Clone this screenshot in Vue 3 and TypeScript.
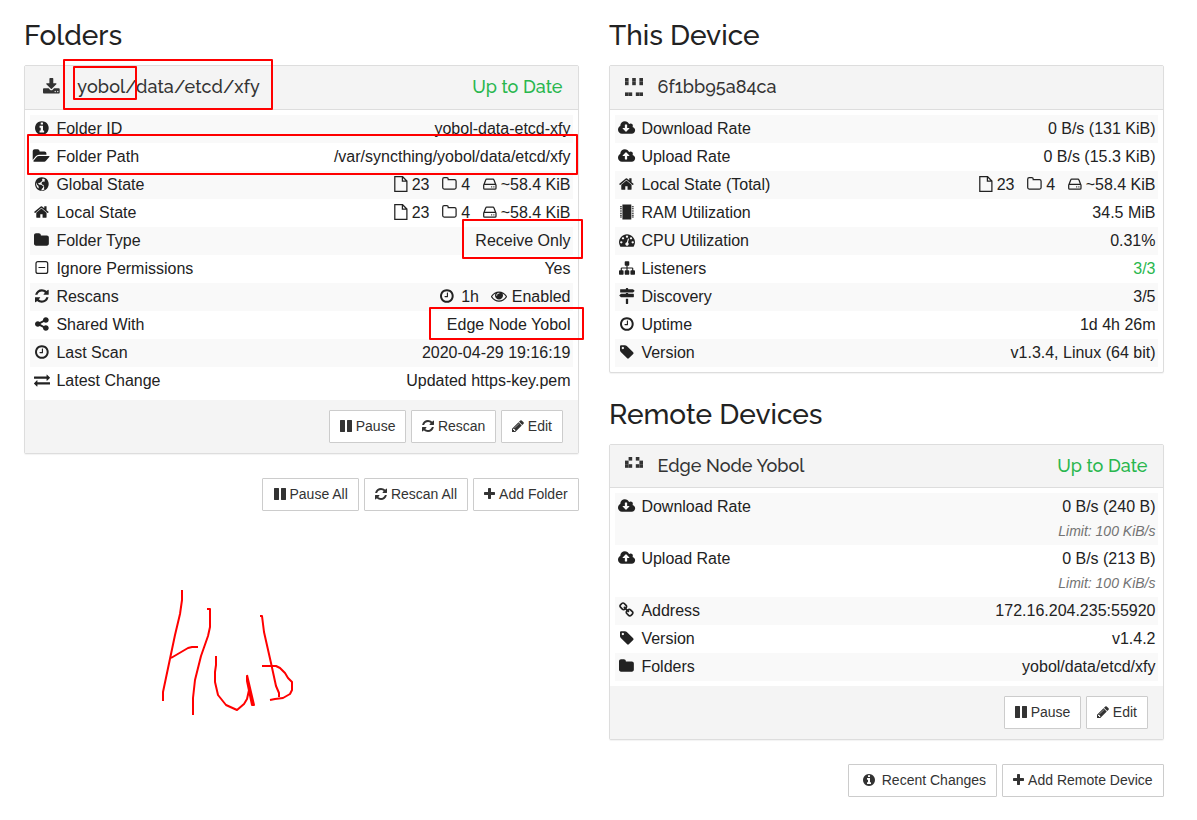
<script setup lang="ts">
import { defineComponent, h } from 'vue'

interface Glyph { box: string; d: string; line?: boolean }

const circle = 'q0 209-103 385.5t-279.5 279.5-385.5 103-385.5-103-279.5-279.5-103-385.5 103-385.5 279.5-279.5 385.5-103 385.5 103 279.5 279.5 103 385.5z'
const cloud = 'M1984 1152q0 159-112.5 271.5t-271.5 112.5h-1088q-185 0-316.5-131.5t-131.5-316.5q0-130 70-240t188-165q-2-30-2-43 0-212 150-362t362-150q156 0 285.5 87t188.5 231q71-62 166-62 106 0 181 75t75 181q0 76-41 138 130 31 213.5 135.5t83.5 238.5z'

const glyphs: Record<string, Glyph> = {
  info: { box: '128 0 1536 1792', d: 'M1152 1376v-160q0-14-9-23t-23-9h-96v-512q0-14-9-23t-23-9h-320q-14 0-23 9t-9 23v160q0 14 9 23t23 9h96v320h-96q-14 0-23 9t-9 23v160q0 14 9 23t23 9h448q14 0 23-9t9-23zm-128-896v-160q0-14-9-23t-23-9h-192q-14 0-23 9t-9 23v160q0 14 9 23t23 9h192q14 0 23-9t9-23zm640 416' + circle },
  folderOpen: { box: '-32 0 1879 1792', d: 'M1815 952q0 31-31 66l-336 396q-43 51-120.5 86.5t-143.5 35.5h-1088q-34 0-60.5-13t-26.5-43q0-31 31-66l336-396q43-51 120.5-86.5t143.5-35.5h1088q34 0 60.5 13t26.5 43zm-343-344v160h-832q-94 0-197 47.5t-164 119.5l-337 396-5 6q0-4-.5-12.5t-.5-12.5v-960q0-92 66-158t158-66h320q92 0 158 66t66 158v32h544q92 0 158 66t66 158z' },
  folder: { box: '64 0 1664 1792', d: 'M1728 608v704q0 92-66 158t-158 66h-1216q-92 0-158-66t-66-158v-960q0-92 66-158t158-66h320q92 0 158 66t66 158v32h672q92 0 158 66t66 158z' },
  home: { box: '64 0 1664 1792', d: 'M1472 992v480q0 26-19 45t-45 19h-384v-384h-256v384h-384q-26 0-45-19t-19-45v-480q0-1 .5-3t.5-3l575-474 575 474q1 2 1 6zm223-69l-62 74q-8 9-21 11h-3q-13 0-21-7l-692-577-692 577q-12 8-24 7-13-2-21-11l-62-74q-8-10-7-23.5t11-21.5l719-599q32-26 76-26t76 26l244 204v-195q0-14 9-23t23-9h192q14 0 23 9t9 23v408l219 182q10 8 11 21.5t-7 23.5z' },
  refresh: { box: '128 0 1536 1792', d: 'M1639 1056q0 5-1 7-64 268-268 434.5t-478 166.5q-146 0-282.5-55t-243.5-157l-129 129q-19 19-45 19t-45-19-19-45v-448q0-26 19-45t45-19h448q26 0 45 19t19 45-19 45l-137 137q71 66 161 102t187 36q134 0 250-65t186-179q11-17 53-117 8-23 30-23h192q13 0 22.5 9.5t9.5 22.5zm25-800v448q0 26-19 45t-45 19h-448q-26 0-45-19t-19-45 19-45l138-138q-148-137-349-137-134 0-250 65t-186 179q-11 17-53 117-8 23-30 23h-199q-13 0-22.5-9.5t-9.5-22.5v-7q65-268 270-434.5t480-166.5q146 0 284 55.5t245 156.5l130-129q19-19 45-19t45 19 19 45z' },
  share: { box: '128 0 1536 1792', d: 'M1344 1024q133 0 226.5 93.5t93.5 226.5-93.5 226.5-226.5 93.5-226.5-93.5-93.5-226.5q0-12 2-34l-360-180q-92 86-218 86-133 0-226.5-93.5t-93.5-226.5 93.5-226.5 226.5-93.5q126 0 218 86l360-180q-2-22-2-34 0-133 93.5-226.5t226.5-93.5 226.5 93.5 93.5 226.5-93.5 226.5-226.5 93.5q-126 0-218-86l-360 180q2 22 2 34t-2 34l360 180q92-86 218-86z' },
  clock: { box: '128 0 1536 1792', d: 'M1024 544v448q0 14-9 23t-23 9h-320q-14 0-23-9t-9-23v-64q0-14 9-23t23-9h224v-352q0-14 9-23t23-9h64q14 0 23 9t9 23zm416 352q0-148-73-273t-198-198-273-73-273 73-198 198-73 273 73 273 198 198 273 73 273-73 198-198 73-273zm224 0' + circle },
  exchange: { box: '0 0 1792 1792', d: 'M1792 1184v192q0 13-9.5 22.5t-22.5 9.5h-1376v192q0 13-9.5 22.5t-22.5 9.5q-12 0-24-10l-319-320q-9-9-9-22 0-14 9-23l320-320q9-9 23-9 13 0 22.5 9.5t9.5 22.5v192h1376q13 0 22.5 9.5t9.5 22.5zm0-544q0 14-9 23l-320 320q-9 9-23 9-13 0-22.5-9.5t-9.5-22.5v-192h-1376q-13 0-22.5-9.5t-9.5-22.5v-192q0-13 9.5-22.5t22.5-9.5h1376v-192q0-14 9-23t23-9q12 0 24 10l319 319q9 9 9 23z' },
  eye: { box: '0 0 1792 1792', d: 'M1664 960q-152-236-381-353 61 104 61 225 0 185-131.5 316.5t-316.5 131.5-316.5-131.5-131.5-316.5q0-121 61-225-229 117-381 353 133 205 333.5 326.5t434.5 121.5 434.5-121.5 333.5-326.5zm-720-384q0-20-14-34t-34-14q-125 0-214.5 89.5t-89.5 214.5q0 20 14 34t34 14 34-14 14-34q0-86 61-147t147-61q20 0 34-14t14-34zm848 384q0 34-20 69-140 230-376.5 368.5t-499.5 138.5-499.5-139-376.5-368q-20-35-20-69t20-69q140-229 376.5-368t499.5-139 499.5 139 376.5 368q20 35 20 69z' },
  pencil: { box: '128 0 1536 1792', d: 'M491 1536l91-91-235-235-91 91v107h128v128h107zm523-928q0-22-22-22-10 0-17 7l-542 542q-7 7-7 17 0 22 22 22 10 0 17-7l542-542q7-7 7-17zm-54-192l416 416-832 832h-416v-416zm683 96q0 53-37 90l-166 166-416-416 166-165q36-38 90-38 53 0 91 38l235 234q37 39 37 91z' },
  plus: { box: '192 0 1408 1792', d: 'M1600 736v192q0 40-28 68t-68 28h-416v416q0 40-28 68t-68 28h-192q-40 0-68-28t-28-68v-416h-416q-40 0-68-28t-28-68v-192q0-40 28-68t68-28h416v-416q0-40 28-68t68-28h192q40 0 68 28t28 68v416h416q40 0 68 28t28 68z' },
  pause: { box: '128 0 1536 1792', d: 'M1664 192v1408q0 26-19 45t-45 19h-512q-26 0-45-19t-19-45v-1408q0-26 19-45t45-19h512q26 0 45 19t19 45zm-896 0v1408q0 26-19 45t-45 19h-512q-26 0-45-19t-19-45v-1408q0-26 19-45t45-19h512q26 0 45 19t19 45z' },
  sitemap: { box: '0 0 1792 1792', d: 'M1792 1248v320q0 40-28 68t-68 28h-320q-40 0-68-28t-28-68v-320q0-40 28-68t68-28h96v-192h-512v192h96q40 0 68 28t28 68v320q0 40-28 68t-68 28h-320q-40 0-68-28t-28-68v-320q0-40 28-68t68-28h96v-192h-512v192h96q40 0 68 28t28 68v320q0 40-28 68t-68 28h-320q-40 0-68-28t-28-68v-320q0-40 28-68t68-28h96v-192q0-52 38-90t90-38h512v-192h-96q-40 0-68-28t-28-68v-320q0-40 28-68t68-28h320q40 0 68 28t28 68v320q0 40-28 68t-68 28h-96v192h512q52 0 90 38t38 90v192h96q40 0 68 28t28 68z' },
  tag: { box: '128 0 1536 1792', d: 'M576 448q0-53-37.5-90.5t-90.5-37.5-90.5 37.5-37.5 90.5 37.5 90.5 90.5 37.5 90.5-37.5 37.5-90.5zm1067 576q0 53-37 90l-491 492q-39 37-91 37-53 0-90-37l-715-716q-38-37-64.5-101t-26.5-117v-416q0-52 38-90t90-38h416q53 0 117 26.5t102 64.5l715 714q37 39 37 91z' },
  cloudDown: { box: '64 0 1920 1792', d: 'M1344 928q0-14-9-23t-23-9h-224v-352q0-13-9.5-22.5t-22.5-9.5h-192q-13 0-22.5 9.5t-9.5 22.5v352h-224q-13 0-22.5 9.5t-9.5 22.5q0 14 9 23l352 352q9 9 23 9t23-9l351-351q10-12 10-24z' + cloud },
  cloudUp: { box: '64 0 1920 1792', d: 'M1344 864q0-14-9-23l-352-352q-9-9-23-9t-23 9l-351 351q-10 12-10 24 0 14 9 23t23 9h224v352q0 13 9.5 22.5t22.5 9.5h192q13 0 22.5-9.5t9.5-22.5v-352h224q13 0 22.5-9.5t9.5-22.5z' + cloud },
  gauge: { box: '0 0 1792 1792', d: 'M384 1152q0-53-37.5-90.5t-90.5-37.5-90.5 37.5-37.5 90.5 37.5 90.5 90.5 37.5 90.5-37.5 37.5-90.5zm192-448q0-53-37.5-90.5t-90.5-37.5-90.5 37.5-37.5 90.5 37.5 90.5 90.5 37.5 90.5-37.5 37.5-90.5zm428 481l101-382q6-26-7.5-48.5t-38.5-29.5-48 6.5-30 39.5l-101 382q-60 5-107 43.5t-63 98.5q-20 77 20 146t117 89 146-20 89-117q16-60-6-117t-72-91zm660-33q0-53-37.5-90.5t-90.5-37.5-90.5 37.5-37.5 90.5 37.5 90.5 90.5 37.5 90.5-37.5 37.5-90.5zm-640-640q0-53-37.5-90.5t-90.5-37.5-90.5 37.5-37.5 90.5 37.5 90.5 90.5 37.5 90.5-37.5 37.5-90.5zm448 192q0-53-37.5-90.5t-90.5-37.5-90.5 37.5-37.5 90.5 37.5 90.5 90.5 37.5 90.5-37.5 37.5-90.5zm320 448q0 261-141 483-19 29-54 29h-1402q-35 0-54-29-141-221-141-483 0-182 71-348t191-286 286-191 348-71 348 71 286 191 191 286 71 348z' },
  signs: { box: '0 0 1792 1792', d: 'M1745 297q10 10 10 23t-10 23l-141 141q-28 28-68 28h-1344q-26 0-45-19t-19-45v-256q0-26 19-45t45-19h576v-64q0-26 19-45t45-19h128q26 0 45 19t19 45v64h512q40 0 68 28zm-977 919h256v512q0 26-19 45t-45 19h-128q-26 0-45-19t-19-45v-512zm832-576q26 0 45 19t19 45v256q0 26-19 45t-45 19h-1344q-40 0-68-28l-141-141q-10-10-10-23t10-23l141-141q28-28 68-28h512v-192h256v192h576z' },
  link: { box: '64 0 1664 1792', d: 'M1520 1216q0-40-28-68l-208-208q-28-28-68-28-42 0-72 32 3 3 19 18.5t21.5 21.5 15 19 13 25.5 3.5 27.5q0 40-28 68t-68 28q-15 0-27.5-3.5t-25.5-13-19-15-21.5-21.5-18.5-19q-33 31-33 73 0 40 28 68l206 207q27 27 68 27 40 0 68-26l147-146q28-28 28-67zm-703-705q0-40-28-68l-206-207q-28-28-68-28-39 0-68 27l-147 146q-28 28-28 67 0 40 28 68l208 208q27 27 68 27 42 0 72-31-3-3-19-18.5t-21.5-21.5-15-19-13-25.5-3.5-27.5q0-40 28-68t68-28q15 0 27.5 3.5t25.5 13 19 15 21.5 21.5 18.5 19q33-31 33-73zm895 705q0 120-85 203l-147 146q-83 83-203 83-121 0-204-85l-206-207q-83-83-83-203 0-123 88-209l-88-88q-86 88-208 88-120 0-204-84l-208-208q-84-84-84-204t85-203l147-146q83-83 203-83 121 0 204 85l206 207q83 83 83 203 0 123-88 209l88 88q86-88 208-88 120 0 204 84l208 208q84 84 84 204z' },
  download: { box: '64 0 1664 1792', d: 'M1344 1344q0-26-19-45t-45-19-45 19-19 45 19 45 45 19 45-19 19-45zm256 0q0-26-19-45t-45-19-45 19-19 45 19 45 45 19 45-19 19-45zm128-224v320q0 40-28 68t-68 28h-1472q-40 0-68-28t-28-68v-320q0-40 28-68t68-28h465l135 136q58 56 136 56t136-56l136-136h464q40 0 68 28t28 68zm-325-569q17 41-14 70l-448 448q-18 19-45 19t-45-19l-448-448q-31-29-14-70 17-39 59-39h256v-448q0-26 19-45t45-19h256q26 0 45 19t19 45v448h256q42 0 59 39z' },
  chip: { box: '128 0 1536 1792', d: 'M400 64h992v1664h-992zM128 256h208v96h-208zM128 448h208v96h-208zM128 640h208v96h-208zM128 832h208v96h-208zM128 1024h208v96h-208zM128 1216h208v96h-208zM128 1408h208v96h-208zM1456 256h208v96h-208zM1456 448h208v96h-208zM1456 640h208v96h-208zM1456 832h208v96h-208zM1456 1024h208v96h-208zM1456 1216h208v96h-208zM1456 1408h208v96h-208z' },
  globe: { box: '128 0 1536 1792', d: 'M1664 896' + circle + 'M1010 270l-110 130 60 60-50 120-150 90-60 120-130-40-90 60 60 110 130 60 170 10 130 110 110 60-60 170-120 110-60 160q190 10 350-90l-60-130 40-150-80-130 20-90-150-30-100-140 40-150 130-80 140 30 60-80-40-90 70-50q-90-90-250-150zM300 720q-50 130-30 290 50 240 240 380l40-130-60-170-130-120z' },
  file: { box: '0 0 13.7 16', line: true, d: 'M.8 .7H8.6L12.9 5V15.3H.8zM8.4 .9V5.2H12.7' },
  folderLine: { box: '0 0 14.9 16', line: true, d: 'M.7 3.2Q.7 1.7 2.2 1.7H4.8Q6.2 1.7 6.2 3V3.7H12.6Q14.1 3.7 14.1 5.2V11.6Q14.1 13.1 12.6 13.1H2.2Q.7 13.1 .7 11.6z' },
  drive: { box: '0 0 13.7 16', line: true, d: 'M.7 9Q.7 8.3 1.7 8.3H12Q13 8.3 13 9V12.2Q13 13.2 12 13.2H1.7Q.7 13.2 .7 12.2zM.9 8.8L2.8 3.8Q3 3.2 3.7 3.2H10Q10.7 3.2 10.9 3.8L12.8 8.8M8.2 10.8H9.2M10.4 10.8H11.4' },
  minusSquare: { box: '0 0 13.7 16', line: true, d: 'M3 1.6H10.7Q12.7 1.6 12.7 3.6V11.4Q12.7 13.4 10.7 13.4H3Q1 13.4 1 11.4V3.6Q1 1.6 3 1.6zM3.5 7.5H10.2' },
}

const Icon = defineComponent({
  props: { name: { type: String, required: true }, fixed: Boolean },
  setup(props) {
    return () => {
      const g = glyphs[props.name]
      const [, , w, ht] = g.box.split(' ').map(Number)
      const svg = h('svg', {
        viewBox: g.box,
        width: `${w / ht}em`,
        height: '1em',
        class: g.line ? 'glyph line' : 'glyph',
      }, [h('path', { d: g.d, 'fill-rule': 'evenodd' })])
      return h('span', { class: props.fixed ? 'icon fixed' : 'icon' }, [svg])
    }
  },
})

interface Part { icon: string; text: string; fixed?: boolean }
interface Row { icon: string; label: string; value?: string; parts?: Part[]; note?: string; ok?: boolean }

const counts: Part[] = [
  { icon: 'file', text: '23' },
  { icon: 'folderLine', text: '4' },
  { icon: 'drive', text: '~58.4 KiB' },
]

const folderRows: Row[] = [
  { icon: 'info', label: 'Folder ID', value: 'yobol-data-etcd-xfy' },
  { icon: 'folderOpen', label: 'Folder Path', value: '/var/syncthing/yobol/data/etcd/xfy' },
  { icon: 'globe', label: 'Global State', parts: counts },
  { icon: 'home', label: 'Local State', parts: counts },
  { icon: 'folder', label: 'Folder Type', value: 'Receive Only' },
  { icon: 'minusSquare', label: 'Ignore Permissions', value: 'Yes' },
  { icon: 'refresh', label: 'Rescans', parts: [{ icon: 'clock', text: '1h', fixed: true }, { icon: 'eye', text: 'Enabled' }] },
  { icon: 'share', label: 'Shared With', value: 'Edge Node Yobol' },
  { icon: 'clock', label: 'Last Scan', value: '2020-04-29 19:16:19' },
  { icon: 'exchange', label: 'Latest Change', value: 'Updated https-key.pem' },
]

const deviceRows: Row[] = [
  { icon: 'cloudDown', label: 'Download Rate', value: '0 B/s (131 KiB)' },
  { icon: 'cloudUp', label: 'Upload Rate', value: '0 B/s (15.3 KiB)' },
  { icon: 'home', label: 'Local State (Total)', parts: counts },
  { icon: 'chip', label: 'RAM Utilization', value: '34.5 MiB' },
  { icon: 'gauge', label: 'CPU Utilization', value: '0.31%' },
  { icon: 'sitemap', label: 'Listeners', value: '3/3', ok: true },
  { icon: 'signs', label: 'Discovery', value: '3/5' },
  { icon: 'clock', label: 'Uptime', value: '1d 4h 26m' },
  { icon: 'tag', label: 'Version', value: 'v1.3.4, Linux (64 bit)' },
]

const remoteRows: Row[] = [
  { icon: 'cloudDown', label: 'Download Rate', value: '0 B/s (240 B)', note: 'Limit: 100 KiB/s' },
  { icon: 'cloudUp', label: 'Upload Rate', value: '0 B/s (213 B)', note: 'Limit: 100 KiB/s' },
  { icon: 'link', label: 'Address', value: '172.16.204.235:55920' },
  { icon: 'tag', label: 'Version', value: 'v1.4.2' },
  { icon: 'folder', label: 'Folders', value: 'yobol/data/etcd/xfy' },
]

const Rows = defineComponent({
  props: { rows: { type: Array as () => Row[], required: true } },
  setup(props) {
    return () => h('div', { class: 'rows' }, props.rows.map((r) =>
      h('div', { class: 'row' }, [
        h('div', { class: 'label' }, [h(Icon, { name: r.icon, fixed: true }), '\u00a0' + r.label]),
        h('div', { class: r.ok ? 'value ok' : 'value' }, [
          r.parts
            ? r.parts.map((p) => h('span', { class: 'part' }, [h(Icon, { name: p.icon, fixed: p.fixed }), '\u00a0' + p.text]))
            : r.value,
          r.note ? h('div', { class: 'note' }, r.note) : null,
        ]),
      ])))
  },
})

const localCells = [[0, 0], [2, 0], [4, 0], [0, 1], [2, 1], [4, 1], [0, 4], [1, 4], [3, 4], [4, 4]]
const remoteCells = [[1, 0], [3, 0], [0, 1], [4, 1], [0, 2], [1, 2], [3, 2], [4, 2]]
</script>

<template>
  <main class="page">
    <section class="column">
      <h3 class="title">Folders</h3>
      <div class="panel">
        <header class="head">
          <Icon name="download" fixed class="head-icon" />
          <span class="name n-folder">yobol/data/etcd/xfy</span>
          <span class="status">Up to Date</span>
        </header>
        <Rows :rows="folderRows" />
        <footer class="foot">
          <button class="btn"><Icon name="pause" />&nbsp;Pause</button>
          <button class="btn"><Icon name="refresh" />&nbsp;Rescan</button>
          <button class="btn"><Icon name="pencil" />&nbsp;Edit</button>
        </footer>
      </div>
      <div class="actions">
        <button class="btn"><Icon name="pause" />&nbsp;Pause All</button>
        <button class="btn"><Icon name="refresh" />&nbsp;Rescan All</button>
        <button class="btn"><Icon name="plus" />&nbsp;Add Folder</button>
      </div>
    </section>

    <section class="column">
      <h3 class="title">This Device</h3>
      <div class="panel device">
        <header class="head">
          <svg class="identicon" viewBox="0 0 5 5">
            <rect v-for="c in localCells" :key="c.join()" :x="c[0]" :y="c[1]" width="1" height="1" />
          </svg>
          <span class="name">6f1bb95a84ca</span>
        </header>
        <Rows :rows="deviceRows" />
      </div>
      <h3 class="title t-remote">Remote Devices</h3>
      <div class="panel remote">
        <header class="head">
          <svg class="identicon" viewBox="0 0 5 5">
            <rect v-for="c in remoteCells" :key="c.join()" :x="c[0]" :y="c[1]" width="1" height="1" />
          </svg>
          <span class="name">Edge Node Yobol</span>
          <span class="status">Up to Date</span>
        </header>
        <Rows :rows="remoteRows" />
        <footer class="foot">
          <button class="btn"><Icon name="pause" />&nbsp;Pause</button>
          <button class="btn"><Icon name="pencil" />&nbsp;Edit</button>
        </footer>
      </div>
      <div class="actions">
        <button class="btn"><Icon name="info" fixed />&nbsp;Recent Changes</button>
        <button class="btn"><Icon name="plus" />&nbsp;Add Remote Device</button>
      </div>
    </section>

    <svg class="marks" viewBox="0 0 1197 820" width="1197" height="820">
      <rect x="64" y="60" width="208" height="49" />
      <rect x="74" y="67" width="62" height="32" />
      <rect x="28" y="135" width="549" height="39" />
      <rect x="463" y="220" width="119" height="38" />
      <rect x="430" y="308" width="153" height="31" />
      <path d="M182 590V600L180 614L175 635L163 692V701M171 658L188 648L192 647H198M207 609H210V627L208 636L201 656L195 680L193 698V715" />
      <path d="M216 656V665L215 672V682L218 695L226 705L237 710L244 704L247 699L249 690L247 676V681L252 705H254L247 675" />
      <path d="M260 616H262L264 632L271 663L276 686L279 693V697M262 666H276L280 668L285 673L288 678L292 682V690L290 694L283 698L275 699L270 700" />
    </svg>
  </main>
</template>

<style>
html, body { margin: 0; background: #fff; overflow: hidden; }
.icon { display: inline-block; line-height: 1; }
.icon.fixed { width: 1.2857em; text-align: center; }
.glyph { display: inline-block; vertical-align: -0.143em; fill: currentColor; overflow: visible; }
.glyph.line { fill: none; stroke: currentColor; stroke-width: 1.25; }
.rows { padding: 5px; }
.row { display: flex; justify-content: space-between; padding: 0 2.5px 0 1.4px; line-height: 28px; }
.row:nth-child(odd) { background: #f9f9f9; }
.label, .value { white-space: nowrap; }
.value { text-align: right; }
.value.ok { color: #29b74e; }
.part + .part { margin-left: 12.4px; }
.note { height: 24px; line-height: 20px; font-size: 14px; font-style: italic; color: #737373; }
</style>

<style scoped>
.page {
  position: relative;
  box-sizing: border-box;
  display: flex;
  gap: 30px;
  width: 1197px;
  height: 820px;
  padding: 15px 33px 0 24px;
  font: 16px/28px "Liberation Sans", Arial, sans-serif;
  color: #222;
}
.column { width: 555px; }
.title {
  height: 40px;
  margin: 0 0 10px;
  font: 500 28px/42px Raleway, Lato, sans-serif;
  color: #222;
  white-space: nowrap;
}
.t-remote { margin-top: 21px; }
.panel {
  box-sizing: border-box;
  border: 1px solid #ddd;
  border-radius: 2px;
  background: #fff;
  box-shadow: 0 1px 1px rgba(0, 0, 0, 0.05);
}
.head {
  box-sizing: border-box;
  display: flex;
  align-items: center;
  height: 44px;
  padding: 0 15.5px 1px 14.6px;
  border-bottom: 1px solid #ddd;
  background: #f4f4f4;
  font: 500 18px/20px Raleway, Lato, sans-serif;
  color: #333;
}
.remote .head { height: 43px; }
.head-icon { margin-right: 14.6px; }
.identicon { width: 18px; height: 18px; margin-right: 15px; fill: #333; }
.name { white-space: nowrap; }
.n-folder { letter-spacing: 0.12px; }
.status { margin-left: auto; color: #29b74e; }
.foot {
  box-sizing: border-box;
  display: flex;
  justify-content: flex-end;
  gap: 4.6px;
  height: 53px;
  padding: 10px 15px;
  background: #f4f4f4;
}
.actions { display: flex; justify-content: flex-end; gap: 4.4px; margin-top: 24px; }
.btn {
  box-sizing: border-box;
  height: 33px;
  margin: 0;
  padding: 0 10.4px 2px;
  border: 1px solid #ccc;
  border-radius: 1px;
  background: #fff;
  font: 14px/20px "Liberation Sans", Arial, sans-serif;
  color: #333;
  white-space: nowrap;
}
.foot .btn { padding: 0 10px 2px; }
.marks { position: absolute; left: 0; top: 0; pointer-events: none; fill: none; stroke: #f00; stroke-width: 2; stroke-linejoin: round; }
</style>
